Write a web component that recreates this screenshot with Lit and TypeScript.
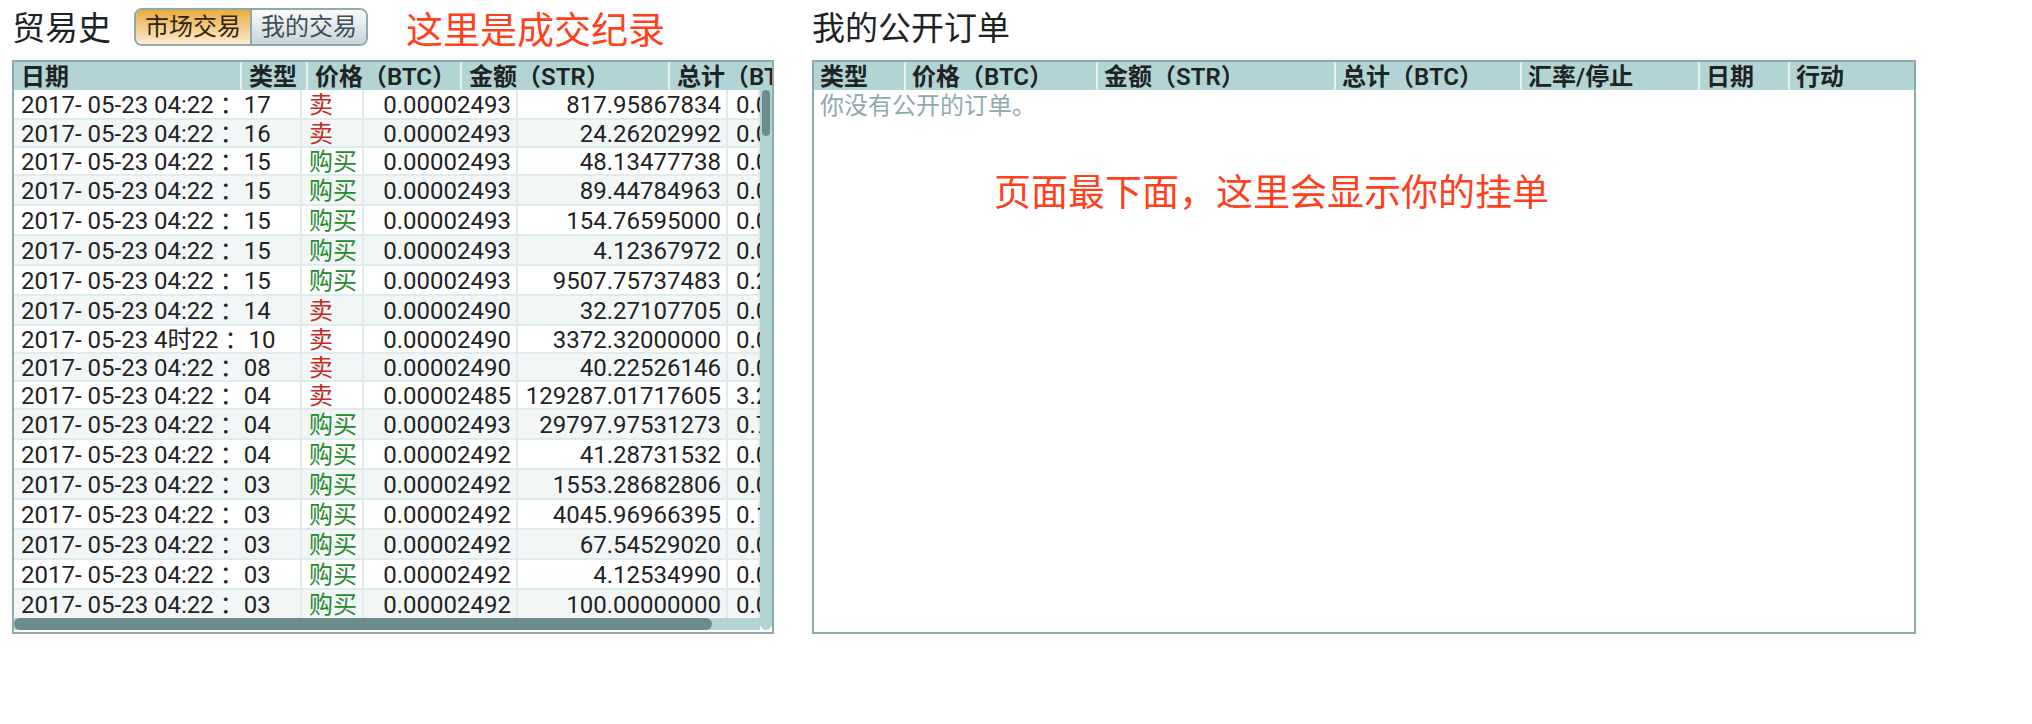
import { LitElement, html, css } from "lit";
import { customElement, state } from "lit/decorators.js";
import { classMap } from "lit/directives/class-map.js";

interface Trade {
  date: string;
  side: "buy" | "sell";
  price: string;
  amount: string;
  total: string;
  tall?: boolean;
}

const t = (
  time: string,
  side: "buy" | "sell",
  price: string,
  amount: string,
  total: string,
  tall = false
): Trade => ({ date: `2017- 05-23 ${time}`, side, price, amount, total, tall });

const TRADES: Trade[] = [
  t("04:22 ：17", "sell", "0.00002493", "817.95867834", "0.02039171", true),
  t("04:22 ：16", "sell", "0.00002493", "24.26202992", "0.00060485"),
  t("04:22 ：15", "buy", "0.00002493", "48.13477738", "0.00120000"),
  t("04:22 ：15", "buy", "0.00002493", "89.44784963", "0.00222993", true),
  t("04:22 ：15", "buy", "0.00002493", "154.76595000", "0.00385832", true),
  t("04:22 ：15", "buy", "0.00002493", "4.12367972", "0.00010280", true),
  t("04:22 ：15", "buy", "0.00002493", "9507.75737483", "0.23702839", true),
  t("04:22 ：14", "sell", "0.00002490", "32.27107705", "0.00080355", true),
  t("4时22 ：10", "sell", "0.00002490", "3372.32000000", "0.08397077"),
  t("04:22 ：08", "sell", "0.00002490", "40.22526146", "0.00100161"),
  t("04:22 ：04", "sell", "0.00002485", "129287.01717605", "3.21278238"),
  t("04:22 ：04", "buy", "0.00002493", "29797.97531273", "0.74286352", true),
  t("04:22 ：04", "buy", "0.00002492", "41.28731532", "0.00102888", true),
  t("04:22 ：03", "buy", "0.00002492", "1553.28682806", "0.03870791", true),
  t("04:22 ：03", "buy", "0.00002492", "4045.96966395", "0.10082556", true),
  t("04:22 ：03", "buy", "0.00002492", "67.54529020", "0.00168323", true),
  t("04:22 ：03", "buy", "0.00002492", "4.12534990", "0.00010280", true),
  t("04:22 ：03", "buy", "0.00002492", "100.00000000", "0.00249200"),
];

@customElement("app-root")
export class AppRoot extends LitElement {
  static styles = css`
    :host {
      display: block;
      color: #1e2324;
      background: #fff;
      font: 24px/28px Roboto, "Noto Sans CJK SC", sans-serif;
    }
    .page {
      display: grid;
      grid-template-columns: minmax(0, 762fr) minmax(0, 1104fr);
      column-gap: 38px;
      padding: 0 116px 0 12px;
    }
    .pane {
      display: flex;
      flex-direction: column;
    }
    .bar {
      display: flex;
      align-items: center;
      height: 60px;
      box-sizing: border-box;
      padding-bottom: 6px;
      white-space: nowrap;
    }
    .title {
      margin: 0;
      padding-top: 4px;
      font-size: 33px;
      line-height: 48px;
      font-weight: 400;
    }
    .switch {
      display: flex;
      margin-left: 23px;
      border: 2px solid #8faaac;
      border-radius: 8px;
      overflow: hidden;
    }
    .switch button {
      height: 34px;
      padding: 0 9px;
      border: 0;
      font: inherit;
      line-height: 34px;
      color: #3f4d54;
      background: linear-gradient(#fbfcfc, #c6d3dc);
      cursor: pointer;
    }
    .switch button + button {
      border-left: 2px solid #8faaac;
    }
    .switch button.on {
      color: #2e2410;
      background: linear-gradient(#e9ac3d, #fdebd1);
    }
    .note {
      margin: 0;
      font-size: 37px;
      line-height: 48px;
      color: #ff401a;
      white-space: nowrap;
    }
    .bar .note {
      margin-left: 38px;
      padding-top: 10px;
    }
    .box {
      flex: 1;
      border: 2px solid #8faaac;
      overflow: hidden;
    }
    table {
      width: 100%;
      table-layout: fixed;
      border-collapse: separate;
      border-spacing: 0;
    }
    th,
    td {
      box-sizing: border-box;
      height: 28px;
      padding: 2px 5px 0 7px;
      line-height: 24px;
      text-align: left;
      white-space: nowrap;
    }
    th {
      font-weight: 600;
      background: #b2d4d5;
      border-right: 2px solid #e3f0ef;
    }
    th:last-child {
      border-right: 0;
    }
    td {
      border-right: 2px solid #deedeb;
      border-bottom: 2px solid #deedeb;
    }
    .tall td {
      height: 30px;
    }
    tr:nth-child(even) td {
      background: #f2f6f7;
    }
    .trades tr:last-child td {
      border-bottom: 0;
    }
    .num {
      text-align: right;
    }
    .total {
      padding-left: 8px;
    }
    .sell {
      color: #c22a1e;
    }
    .buy {
      color: #248a2c;
    }
    .date {
      width: 288px;
    }
    .type {
      width: 62px;
    }
    .price {
      width: 154px;
    }
    .amount {
      width: 210px;
    }
    .h-date {
      width: 228px;
    }
    .h-type {
      width: 66px;
    }
    .h-price {
      width: 154px;
    }
    .h-amount {
      width: 208px;
    }
    .scroller {
      display: grid;
      grid-template-columns: minmax(0, 1fr) 12px;
      padding-bottom: 2px;
    }
    .clip {
      overflow: hidden;
    }
    .vtrack {
      grid-row: 1 / span 2;
      grid-column: 2;
      background: #b2d4d5;
      border-radius: 0 0 6px 6px;
    }
    .vthumb {
      width: 8px;
      height: 46px;
      margin-left: 2px;
      border-radius: 4px;
      background: #6a8c8d;
    }
    .htrack {
      height: 12px;
      background: #b2d4d5;
    }
    .hthumb {
      width: calc(100% - 48px);
      height: 12px;
      border-radius: 6px;
      background: #6a8c8d;
    }
    .orders th,
    .orders td {
      padding-left: 6px;
    }
    .orders td {
      height: 30px;
      border: 0;
      color: #8faaac;
    }
    .o-type {
      width: 92px;
    }
    .o-price {
      width: 192px;
    }
    .o-amount {
      width: 238px;
    }
    .o-total {
      width: 186px;
    }
    .o-rate {
      width: 178px;
    }
    .o-date {
      width: 90px;
    }
    .o-action {
      width: 124px;
    }
    .box .note {
      margin-top: 50px;
      margin-left: 180px;
    }
  `;

  @state() private tab: "market" | "mine" = "market";

  private tabButton(id: "market" | "mine", label: string) {
    const on = this.tab === id;
    return html`<button
      type="button"
      class=${classMap({ on })}
      aria-pressed=${on}
      @click=${() => (this.tab = id)}
    >${label}</button>`;
  }

  private row(r: Trade) {
    return html`<tr class=${classMap({ tall: !!r.tall })}>
      <td>${r.date}</td>
      <td class=${r.side}>${r.side === "buy" ? "购买" : "卖"}</td>
      <td class="num">${r.price}</td>
      <td class="num">${r.amount}</td>
      <td class="total">${r.total}</td>
    </tr>`;
  }

  render() {
    return html`<main class="page">
      <section class="pane">
        <header class="bar">
          <h2 class="title">贸易史</h2>
          <div class="switch" role="group" aria-label="贸易史">
            ${this.tabButton("market", "市场交易")}${this.tabButton("mine", "我的交易")}
          </div>
          <p class="note">这里是成交纪录</p>
        </header>
        <div class="box">
          <table>
            <thead>
              <tr>
                <th class="h-date">日期</th>
                <th class="h-type">类型</th>
                <th class="h-price">价格（BTC）</th>
                <th class="h-amount">金额（STR）</th>
                <th>总计（BTC）</th>
              </tr>
            </thead>
          </table>
          <div class="scroller">
            <div class="clip">
              <table class="trades">
                <colgroup>
                  <col class="date" /><col class="type" /><col class="price" /><col class="amount" /><col />
                </colgroup>
                <tbody>
                  ${TRADES.map((r) => this.row(r))}
                </tbody>
              </table>
            </div>
            <div class="vtrack"><div class="vthumb"></div></div>
            <div class="htrack"><div class="hthumb"></div></div>
          </div>
        </div>
      </section>
      <section class="pane">
        <header class="bar"><h2 class="title">我的公开订单</h2></header>
        <div class="box">
          <table class="orders">
            <thead>
              <tr>
                <th class="o-type">类型</th>
                <th class="o-price">价格（BTC）</th>
                <th class="o-amount">金额（STR）</th>
                <th class="o-total">总计（BTC）</th>
                <th class="o-rate">汇率/停止</th>
                <th class="o-date">日期</th>
                <th class="o-action">行动</th>
              </tr>
            </thead>
            <tbody>
              <tr><td colspan="7">你没有公开的订单。</td></tr>
            </tbody>
          </table>
          <p class="note">页面最下面，这里会显示你的挂单</p>
        </div>
      </section>
    </main>`;
  }
}
